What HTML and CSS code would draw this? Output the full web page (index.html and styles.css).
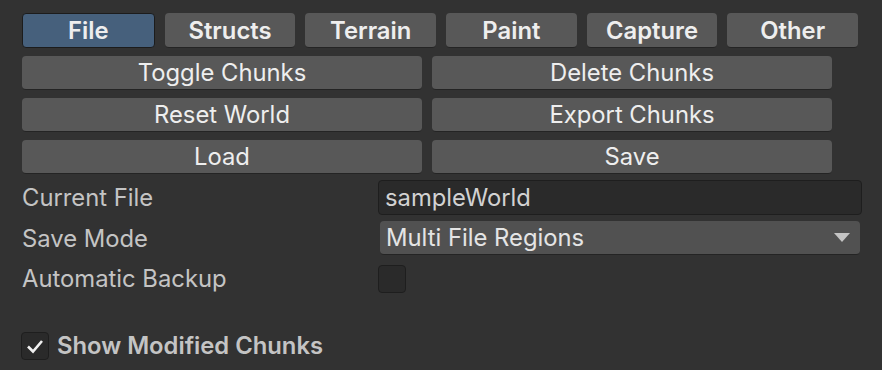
FILE: index.html
```html
<!DOCTYPE html>
<html lang="en">
<head>
    <meta charset="UTF-8">
    <title>World Editor</title>
    <link rel="stylesheet" href="styles.css">
</head>
<body>

<div class="panel">
    <div class="tabs">
        <div class="tab active">File</div>
        <div class="tab">Structs</div>
        <div class="tab">Terrain</div>
        <div class="tab">Paint</div>
        <div class="tab">Capture</div>
        <div class="tab">Other</div>
    </div>

    <div class="btn-grid">
        <div class="btn">Toggle Chunks</div>
        <div class="btn">Delete Chunks</div>
        <div class="btn">Reset World</div>
        <div class="btn">Export Chunks</div>
        <div class="btn">Load</div>
        <div class="btn">Save</div>
    </div>

    <div class="field-row">
        <div class="field-label">Current File</div>
        <div class="text-field">sampleWorld</div>
    </div>
    <div class="field-row">
        <div class="field-label">Save Mode</div>
        <div class="dropdown">
            <span>Multi File Regions</span>
            <span class="arrow"></span>
        </div>
    </div>
    <div class="field-row backup-row">
        <div class="field-label">Automatic Backup</div>
        <div class="checkbox"></div>
    </div>

    <div class="toggle-row">
        <div class="checkbox checked">
            <svg width="20" height="20" viewBox="0 0 20 20">
                <path d="M3 10.5 L8 15.5 L17 5" fill="none" stroke="#f0f0f0" stroke-width="2.6"/>
            </svg>
        </div>
        <div class="toggle-label">Show Modified Chunks</div>
    </div>
</div>

</body>
</html>
```

FILE: styles.css
```css
body {
    margin: 0;
    background-color: #323232;
    font-family: 'Inter', 'Noto Sans', sans-serif;
    color: #c4c4c4;
    font-size: 23.8px;
}

.panel {
    padding: 13px 0 0 22px;
}

.tabs {
    display: flex;
    gap: 10px;
    width: 836px;
}

.tab {
    flex: 1;
    height: 35px;
    box-sizing: border-box;
    display: flex;
    align-items: center;
    justify-content: center;
    background-color: #585858;
    border-radius: 4px;
    border-bottom: 1px solid #242424;
    color: #eeeeee;
    font-weight: 600;
    font-size: 23.8px;
}

.tab.active {
    background-color: #46607c;
    border: 1px solid #1c1c1c;
}

.btn-grid {
    display: grid;
    grid-template-columns: 400px 400px;
    column-gap: 10px;
    row-gap: 8px;
    margin-top: 8px;
}

.btn {
    height: 34px;
    box-sizing: border-box;
    display: flex;
    align-items: center;
    justify-content: center;
    background-color: #585858;
    border-radius: 4px;
    border-bottom: 1px solid #242424;
    color: #eeeeee;
}

.field-row {
    display: flex;
    align-items: center;
    margin-top: 6px;
}

.backup-row {
    margin-top: 9px;
}

.field-label {
    width: 356px;
}

.text-field {
    width: 484px;
    height: 35px;
    box-sizing: border-box;
    padding-left: 6px;
    display: flex;
    align-items: center;
    background-color: #2a2a2a;
    border: 1px solid #1e1e1e;
    border-radius: 4px;
    color: #d2d2d2;
}

.dropdown {
    width: 480px;
    height: 34px;
    margin-left: 2px;
    box-sizing: border-box;
    padding: 0 10px 0 6px;
    display: flex;
    align-items: center;
    justify-content: space-between;
    background-color: #515151;
    border-radius: 4px;
    border-bottom: 1px solid #242424;
    color: #e4e4e4;
}

.arrow {
    width: 0;
    height: 0;
    border-left: 8px solid transparent;
    border-right: 8px solid transparent;
    border-top: 9px solid #c4c4c4;
}

.checkbox {
    width: 28px;
    height: 28px;
    box-sizing: border-box;
    background-color: #2a2a2a;
    border: 1px solid #1e1e1e;
    border-radius: 4px;
    display: flex;
    align-items: center;
    justify-content: center;
}

.toggle-row {
    display: flex;
    align-items: center;
    gap: 8px;
    margin-top: 38px;
    margin-left: -1px;
}

.toggle-label {
    font-weight: 600;
    color: #c4c4c4;
}
```
